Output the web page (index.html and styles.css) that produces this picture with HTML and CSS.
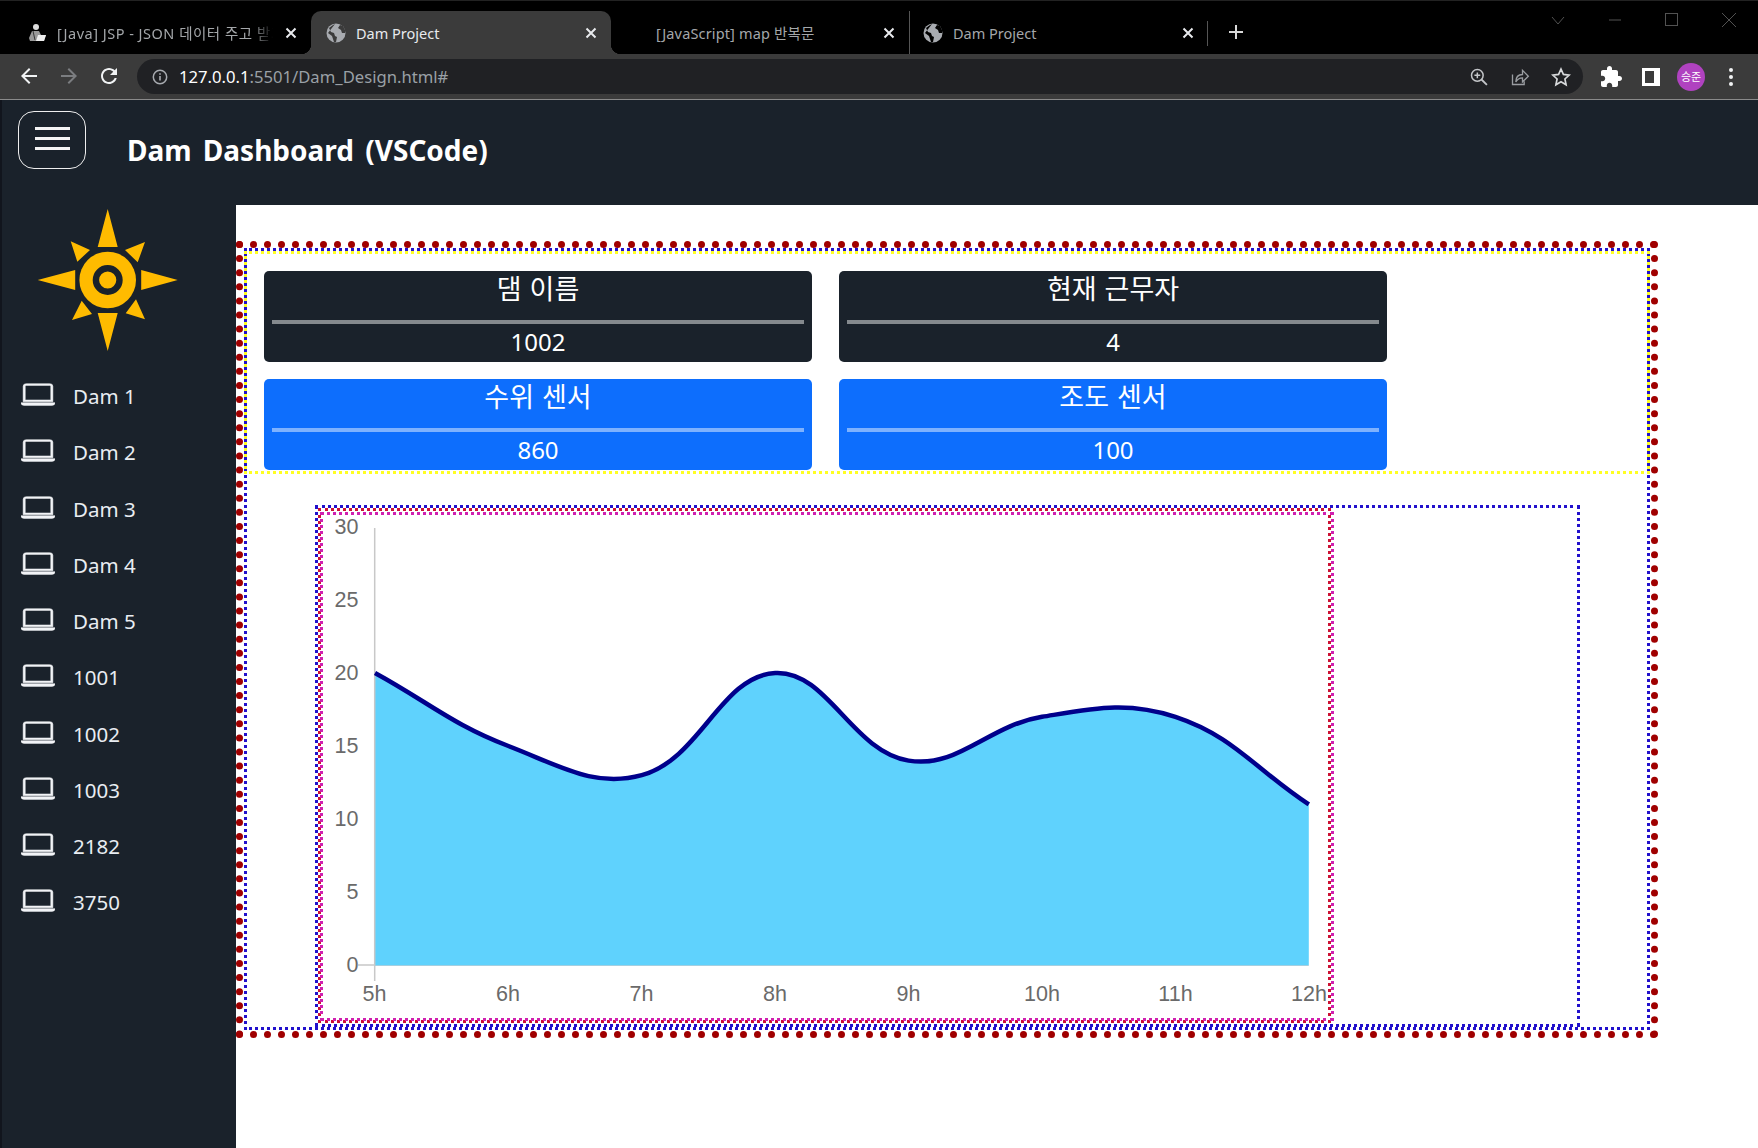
FILE: index.html
```html
<!DOCTYPE html>
<html lang="ko">
<head>
    <meta charset="utf-8">
    <title>Dam Project</title>
    <link rel="stylesheet" href="styles.css">
</head>
<body>
    <!-- browser chrome -->
    <div class="tabstrip">
        <div class="tab">
            <svg class="favicon" viewBox="0 0 20 20"><circle cx="9" cy="4" r="3" fill="#ddd"/><path d="M5 8h7l2 4 5 0-2 6H3l-1-3z" fill="#999"/><path d="M11 12h8l-2 6h-8z" fill="#eee"/><path d="M6 8l2 9" stroke="#333"/></svg>
            <span class="tab-title tab-fade">[Java] JSP - JSON 데이터 주고 받기</span>
            <svg class="tab-close" viewBox="0 0 12 12"><use href="#close"/></svg>
        </div>
        <div class="tab tab-active">
            <svg class="favicon" viewBox="0 0 20 20"><circle cx="10" cy="10" r="9.5" fill="#a8abb0"/><path d="M9 1C6 2 5 4 3 5l2 4 3 1 1 3 2 1-1 5-2 0-2-6-4-3M14 2l-2 3 3 2 1 3h3l0-3-2-4z" fill="#3b3b3b"/></svg>
            <span class="tab-title">Dam Project</span>
            <svg class="tab-close" viewBox="0 0 12 12"><use href="#close"/></svg>
        </div>
        <div class="tab tab-third">
            <span class="favicon"></span>
            <span class="tab-title">[JavaScript] map 반복문</span>
            <svg class="tab-close" viewBox="0 0 12 12"><use href="#close"/></svg>
        </div>
        <div class="tab tab-sep">
            <svg class="favicon" viewBox="0 0 20 20"><circle cx="10" cy="10" r="9.5" fill="#a8abb0"/><path d="M9 1C6 2 5 4 3 5l2 4 3 1 1 3 2 1-1 5-2 0-2-6-4-3M14 2l-2 3 3 2 1 3h3l0-3-2-4z" fill="#000"/></svg>
            <span class="tab-title">Dam Project</span>
            <svg class="tab-close" viewBox="0 0 12 12"><use href="#close"/></svg>
        </div>
        <div class="new-tab">
            <svg viewBox="0 0 16 16" width="16" height="16"><path d="M8 1v14M1 8h14" stroke="#d8d8d8" stroke-width="2"/></svg>
        </div>
        <div class="win-controls">
            <svg viewBox="0 0 14 14" width="14" height="14"><path d="M1 4l6 7 6-7" fill="none" stroke="#525252"/></svg>
            <svg viewBox="0 0 14 14" width="14" height="14"><path d="M1 7h12" stroke="#525252"/></svg>
            <svg viewBox="0 0 14 14" width="14" height="14"><rect x="0.5" y="0.5" width="12" height="12" fill="none" stroke="#525252"/></svg>
            <svg viewBox="0 0 14 14" width="14" height="14"><path d="M0 0l14 14M14 0L0 14" stroke="#525252"/></svg>
        </div>
    </div>
    <div class="toolbar">
        <svg class="nav-btn" viewBox="0 0 24 24"><path fill="#f1f3f4" d="M20 11H7.83l5.59-5.59L12 4l-8 8 8 8 1.41-1.41L7.83 13H20v-2z"/></svg>
        <svg class="nav-btn" viewBox="0 0 24 24"><path fill="#7b7d80" d="M4 11h12.17l-5.59-5.59L12 4l8 8-8 8-1.41-1.41L16.17 13H4v-2z"/></svg>
        <svg class="nav-btn" viewBox="0 0 24 24"><path fill="#f1f3f4" d="M17.65 6.35C16.2 4.9 14.21 4 12 4c-4.42 0-7.99 3.58-7.99 8s3.57 8 7.99 8c3.73 0 6.84-2.55 7.73-6h-2.08c-.82 2.33-3.04 4-5.65 4-3.31 0-6-2.69-6-6s2.69-6 6-6c1.66 0 3.14.69 4.22 1.78L13 11h7V4l-2.35 2.35z"/></svg>
        <div class="omnibox">
            <svg class="info-icon" viewBox="0 0 16 16"><circle cx="8" cy="8" r="6.7" fill="none" stroke="#a8abb0" stroke-width="1.5"/><path d="M8 7v4.5M8 4.2v1.5" stroke="#a8abb0" stroke-width="1.6"/></svg>
            <span class="url"><b>127.0.0.1</b>:5501/Dam_Design.html#</span>
            <div class="omni-icons">
                <svg viewBox="0 0 24 24"><circle cx="10" cy="10" r="7" fill="none" stroke="#c4c6c9" stroke-width="1.8"/><path d="M15 15l6.5 6.5" stroke="#c4c6c9" stroke-width="2.2"/><path d="M10 6.5v7M6.5 10h7" stroke="#c4c6c9" stroke-width="1.8"/></svg>
                <svg viewBox="0 0 24 24"><path d="M3 9v12h14v-4" fill="none" stroke="#9a9da1" stroke-width="1.6"/><path d="M7 18c0-6 3-9 8-9V4l7 7-7 7v-5c-4 0-6 1-8 5z" fill="none" stroke="#9a9da1" stroke-width="1.6"/></svg>
                <svg viewBox="0 0 24 24"><path d="M12 2.5l2.9 6.4 7 .8-5.2 4.7 1.4 6.9-6.1-3.5-6.1 3.5 1.4-6.9-5.2-4.7 7-.8z" fill="none" stroke="#d8dadc" stroke-width="2"/></svg>
            </div>
        </div>
        <div class="tool-icons">
            <svg viewBox="0 0 24 24"><path fill="#fff" d="M20.5 11H19V7c0-1.1-.9-2-2-2h-4V3.5C13 2.12 11.88 1 10.5 1S8 2.12 8 3.5V5H4c-1.1 0-1.99.9-1.99 2v3.8H3.5c1.49 0 2.7 1.21 2.7 2.7s-1.21 2.7-2.7 2.7H2V20c0 1.1.9 2 2 2h3.8v-1.5c0-1.49 1.21-2.7 2.7-2.7 1.49 0 2.7 1.21 2.7 2.7V22H17c1.1 0 2-.9 2-2v-4h1.5c1.38 0 2.5-1.12 2.5-2.5S21.88 11 20.5 11z"/></svg>
            <svg viewBox="0 0 24 24"><path fill="#fff" d="M3 3h18v18H3z"/><path fill="#3b3b3b" d="M6 6h9v12H6z"/></svg>
            <span class="avatar">승준</span>
            <svg viewBox="0 0 24 24"><circle cx="12" cy="5" r="2" fill="#f1f3f4"/><circle cx="12" cy="12" r="2" fill="#f1f3f4"/><circle cx="12" cy="19" r="2" fill="#f1f3f4"/></svg>
        </div>
    </div>

    <!-- page -->
    <header class="topbar">
        <button class="menu-btn"><span></span><span></span><span></span></button>
        <h1 class="brand">Dam Dashboard (VSCode)</h1>
    </header>
    <div class="layout">
        <nav class="sidebar">
            <div class="logo">
                <svg viewBox="0 205 236 163" width="236" height="163">
                    <g fill="#ffbb00">
                        <path d="M107.7 209l10 38h-20zM107.7 351l10-38h-20zM37.7 280l37.5-10v20zM177.7 280l-36.5-10v20z"/>
                        <path d="M70.7 241.3l19.3 8.7-12.7 11.7zM145 242l-20 8 12.7 12.3zM72 320l9.7-19.3 10.3 13.3zM145 319.3l-9-20-10.3 14z"/>
                        <circle cx="107.7" cy="280" r="28.3"/>
                    </g>
                    <circle cx="107.7" cy="280" r="11.8" fill="none" stroke="#1a222b" stroke-width="6.4"/>
                </svg>
            </div>
            <a class="nav-item"><svg viewBox="0 0 16 16" preserveAspectRatio="none"><use href="#laptop"/></svg>Dam 1</a>
            <a class="nav-item"><svg viewBox="0 0 16 16" preserveAspectRatio="none"><use href="#laptop"/></svg>Dam 2</a>
            <a class="nav-item"><svg viewBox="0 0 16 16" preserveAspectRatio="none"><use href="#laptop"/></svg>Dam 3</a>
            <a class="nav-item"><svg viewBox="0 0 16 16" preserveAspectRatio="none"><use href="#laptop"/></svg>Dam 4</a>
            <a class="nav-item"><svg viewBox="0 0 16 16" preserveAspectRatio="none"><use href="#laptop"/></svg>Dam 5</a>
            <a class="nav-item"><svg viewBox="0 0 16 16" preserveAspectRatio="none"><use href="#laptop"/></svg>1001</a>
            <a class="nav-item"><svg viewBox="0 0 16 16" preserveAspectRatio="none"><use href="#laptop"/></svg>1002</a>
            <a class="nav-item"><svg viewBox="0 0 16 16" preserveAspectRatio="none"><use href="#laptop"/></svg>1003</a>
            <a class="nav-item"><svg viewBox="0 0 16 16" preserveAspectRatio="none"><use href="#laptop"/></svg>2182</a>
            <a class="nav-item"><svg viewBox="0 0 16 16" preserveAspectRatio="none"><use href="#laptop"/></svg>3750</a>
        </nav>
        <main class="content">
            <div class="frame-red">
                <div class="frame-blue">
                    <section class="info-box">
                        <div class="card card-dark"><div class="card-title">댐 이름</div><hr><div class="card-value">1002</div></div>
                        <div class="card card-dark"><div class="card-title">현재 근무자</div><hr><div class="card-value">4</div></div>
                        <div class="card card-blue"><div class="card-title">수위 센서</div><hr><div class="card-value">860</div></div>
                        <div class="card card-blue"><div class="card-title">조도 센서</div><hr><div class="card-value">100</div></div>
                    </section>
                    <section class="chart-outer">
                        <div class="chart-red">
                            <div class="chart-magenta">
                                <!-- viewBox uses the page's own coordinates -->
                                <svg class="chart" viewBox="323 515 1008 503" width="1008" height="503">
                                    <path d="M375 673C428.4 702.2 452.2 724.5 508.4 746C558.9 765.3 594 788.3 641.8 775.2C700.7 759.1 720.5 676 775.2 673C827.2 670.2 851.8 751.3 908.6 760.6C958.5 768.8 987.3 725.8 1042 716.8C1094 708.3 1126.8 700.8 1175.4 716.8C1233.5 735.9 1255.4 769.4 1308.8 804.4L1308.8 965L375 965Z" fill="#5fd2fd"/>
                                    <path d="M374.7 528V981M358 965H375" fill="none" stroke="#c8c8c8" stroke-width="1.5"/>
                                    <path d="M375 965.5H1308.8" fill="none" stroke="#a5cfe0" stroke-width="1"/>
                                    <path d="M375 673C428.4 702.2 452.2 724.5 508.4 746C558.9 765.3 594 788.3 641.8 775.2C700.7 759.1 720.5 676 775.2 673C827.2 670.2 851.8 751.3 908.6 760.6C958.5 768.8 987.3 725.8 1042 716.8C1094 708.3 1126.8 700.8 1175.4 716.8C1233.5 735.9 1255.4 769.4 1308.8 804.4" fill="none" stroke="#00008b" stroke-width="4.5"/>
                                    <g class="y-labels">
                                        <text x="358.5" y="534">30</text>
                                        <text x="358.5" y="607">25</text>
                                        <text x="358.5" y="680">20</text>
                                        <text x="358.5" y="753">15</text>
                                        <text x="358.5" y="826">10</text>
                                        <text x="358.5" y="899">5</text>
                                        <text x="358.5" y="972">0</text>
                                    </g>
                                    <g class="x-labels">
                                        <text x="374.5" y="1001">5h</text>
                                        <text x="508" y="1001">6h</text>
                                        <text x="641.5" y="1001">7h</text>
                                        <text x="775" y="1001">8h</text>
                                        <text x="908.5" y="1001">9h</text>
                                        <text x="1042" y="1001">10h</text>
                                        <text x="1175.5" y="1001">11h</text>
                                        <text x="1309" y="1001">12h</text>
                                    </g>
                                </svg>
                            </div>
                        </div>
                    </section>
                </div>
            </div>
        </main>
    </div>

    <svg class="sprites" width="0" height="0">
        <symbol id="laptop" viewBox="0 0 16 16" preserveAspectRatio="none">
            <path fill="#f2f4f7" stroke="#f2f4f7" stroke-width=".25" d="M13.5 3a.5.5 0 0 1 .5.5V11H2V3.5a.5.5 0 0 1 .5-.5h11zm-11-1A1.5 1.5 0 0 0 1 3.5V12h14V3.5A1.5 1.5 0 0 0 13.5 2h-11zM0 12.5h16a1.5 1.5 0 0 1-1.5 1.5h-13A1.5 1.5 0 0 1 0 12.5z"/>
        </symbol>
        <symbol id="close" viewBox="0 0 12 12">
            <path d="M1.5 1.5l9 9M10.5 1.5l-9 9" stroke="#e8eaed" stroke-width="2"/>
        </symbol>
    </svg>
</body>
</html>
```

FILE: styles.css
```css
* {
    box-sizing: border-box;
}
html, body {
    margin: 0;
    height: 100%;
    overflow: hidden;
    background-color: #fff;
    font-family: "Noto Sans", "Noto Sans CJK KR", sans-serif;
}

/* browser chrome */
.tabstrip {
    height: 54px;
    padding: 10px 0 0 12px;
    display: flex;
    background-color: #000;
    border-top: 1px solid #222;
    color: #a4a7aa;
}
.tab {
    width: 299px;
    height: 43px;
    padding: 0 12px 0 15px;
    display: flex;
    align-items: center;
    gap: 10px;
    position: relative;
    font-size: 14.5px;
}
.tab-active {
    width: 300px;
    background-color: #3b3b3b;
    border-radius: 10px 10px 0 0;
    color: #e8eaed;
}
.tab-active::before, .tab-active::after {
    content: "";
    position: absolute;
    bottom: 0;
    width: 10px;
    height: 10px;
}
.tab-active::before {
    left: -10px;
    background: radial-gradient(circle at 0 0, transparent 10px, #3b3b3b 10.5px);
}
.tab-active::after {
    right: -10px;
    background: radial-gradient(circle at 100% 0, transparent 10px, #3b3b3b 10.5px);
}
.tab-third {
    width: 298px;
    letter-spacing: .15px;
}
.tab-sep {
    padding-left: 13px;
    border-left: 1px solid #555;
    background-clip: padding-box;
}
.tab-sep::after {
    content: "";
    position: absolute;
    right: 0;
    top: 10px;
    height: 25px;
    border-right: 1px solid #555;
}
.favicon {
    width: 20px;
    height: 20px;
    flex: none;
}
.tab-title {
    flex: 1;
    white-space: nowrap;
    overflow: hidden;
}
.tab-fade {
    letter-spacing: .5px;
    -webkit-mask-image: linear-gradient(to right, #000 90%, transparent 100%);
    mask-image: linear-gradient(to right, #000 90%, transparent 100%);
}
.tab-close {
    width: 12px;
    height: 12px;
    margin: 0 2px;
    flex: none;
}
.new-tab {
    width: 54px;
    padding: 12px 0 0 20px;
}
.win-controls {
    margin-left: auto;
    margin-top: 2px;
    padding-right: 22px;
    display: flex;
    gap: 43px;
}

.toolbar {
    height: 46px;
    padding: 5px 0 0 17px;
    display: flex;
    background-color: #3b3b3b;
    border-bottom: 1px solid #8a8a8a;
}
.nav-btn {
    width: 24px;
    height: 24px;
    margin: 5px 16px 0 0;
    flex: none;
}
.omnibox {
    width: 1446px;
    height: 35px;
    padding-left: 15px;
    display: flex;
    align-items: center;
    border-radius: 18px;
    background-color: #202124;
}
.info-icon {
    width: 16px;
    height: 16px;
    flex: none;
}
.url {
    margin-left: 11px;
    font-size: 16.65px;
    color: #9aa0a6;
}
.url b {
    font-weight: 400;
    color: #fff;
}
.omni-icons {
    margin-left: auto;
    padding-right: 12px;
    display: flex;
    gap: 21px;
}
.omni-icons svg {
    width: 20px;
    height: 20px;
}
.tool-icons {
    margin-left: 16px;
    height: 35px;
    display: flex;
    align-items: center;
    gap: 15.5px;
}
.tool-icons svg {
    width: 24px;
    height: 24px;
}
.avatar {
    width: 28px;
    height: 28px;
    margin: 0 -2px 0 -1px;
    border-radius: 50%;
    background-color: #b042c0;
    color: #fff;
    font-size: 11px;
    line-height: 28px;
    text-align: center;
}

/* page */
.topbar {
    height: 105px;
    padding: 11px 0 0 18px;
    display: flex;
    background-color: #1a222b;
    box-shadow: inset 2px 0 #11151d;
    color: #fff;
}
.menu-btn {
    width: 68px;
    height: 58px;
    padding: 15px 0 0;
    display: flex;
    flex-direction: column;
    align-items: center;
    gap: 7.5px;
    background: none;
    border: 1px solid #eee;
    border-radius: 16px;
}
.menu-btn span {
    display: block;
    width: 35px;
    height: 2.5px;
    background-color: #f4f4f4;
}
.brand {
    margin: 20px 0 0 41px;
    font-size: 28px;
    font-weight: 700;
    line-height: 38px;
    word-spacing: 4px;
}
.layout {
    display: flex;
    height: 943px;
}
.sidebar {
    width: 236px;
    flex: none;
    background-color: #1a222b;
    box-shadow: inset 2px 0 #11151d;
    color: #e9edf2;
}
.logo {
    height: 163px;
}
.logo svg {
    display: block;
}
.nav-item {
    height: 56.25px;
    padding-left: 21px;
    display: flex;
    align-items: center;
    gap: 18px;
    font-size: 20.5px;
}
.nav-item svg {
    width: 34px;
    height: 29px;
    margin-top: -3px;
}
.sprites {
    position: absolute;
}

.content {
    flex: 1;
    padding-top: 36px;
}
/* debug style borders of each nested block */
.frame-red {
    width: 1422px;
    padding: 0 1px 1px;
    border: 7px dotted #a00000;
}
.frame-blue {
    border: 3px dotted #2211cc;
}
.info-box {
    margin: 0 -3px;
    padding: 17px 0 1px 17px;
    display: grid;
    grid-template-columns: 548px 548px;
    column-gap: 27px;
    row-gap: 17px;
    border: 3px dotted #ffff22;
}
.card {
    height: 91px;
    padding: 0 8px;
    border-radius: 5px;
    color: #fff;
    text-align: center;
}
.card-dark {
    background-color: #1a222b;
}
.card-blue {
    background-color: #0d6efd;
}
.card-title {
    height: 36px;
    font-size: 27px;
    line-height: 36px;
    word-spacing: 1px;
}
.card hr {
    height: 4px;
    margin: 13px 0 0;
    border: 0;
    background-color: rgba(255, 255, 255, .47);
}
.card-value {
    font-size: 24px;
    line-height: 36px;
}
.chart-outer {
    width: 1265px;
    height: 522px;
    margin: 31px 0 0 68px;
    border: 3px dotted #2211cc;
}
.chart-red {
    width: 1013px;
    height: 515px;
    border: 3px dotted #cc1133;
}
.chart-magenta {
    width: 1014px;
    height: 509px;
    margin: 1px 0 0 -1px;
    border: 3px dotted #d020b0;
}
.chart {
    display: block;
    overflow: visible;
}
.chart text {
    font-family: "Liberation Sans", Arial, sans-serif;
    font-size: 21.5px;
    fill: #6a6a6a;
}
.y-labels text {
    text-anchor: end;
}
.x-labels text {
    text-anchor: middle;
}
```
